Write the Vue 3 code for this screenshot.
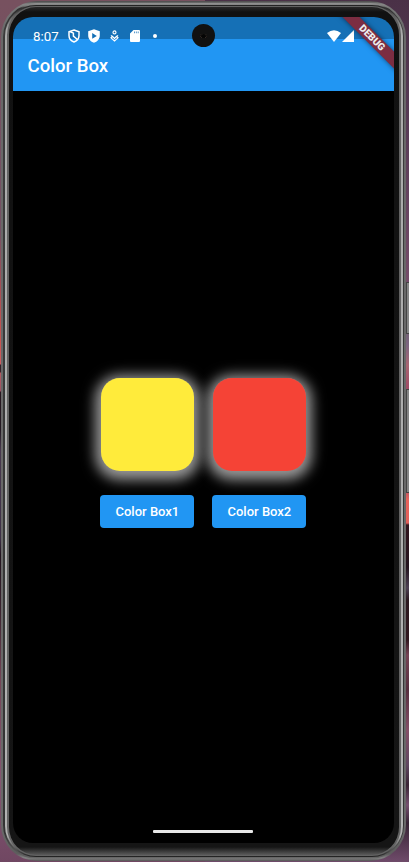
<script setup>
import { ref } from 'vue'

const boxes = ref([
  { label: 'Color Box1', tone: 'yellow' },
  { label: 'Color Box2', tone: 'red' },
])
</script>

<template>
  <div class="desktop">
    <i class="key key-short"></i>
    <i class="key key-long"></i>
    <div class="phone">
      <div class="groove">
        <div class="rim">
          <div class="bezel">
            <div class="screen">
              <header>
                <div class="status">
                  <span class="time">8:07</span>
                  <svg class="shield" viewBox="0 0 12 14"><path d="M6 1 11 2.7V6.5C11 9.7 8.8 12 6 13 3.2 12 1 9.7 1 6.5V2.7Z" fill="none" stroke="#fff" stroke-width="1.5" /><path d="M2 2.5 5.4 4.2V7.2L9.4 10.5" fill="none" stroke="#fff" stroke-width="1.5" /></svg>
                  <svg class="play" viewBox="0 0 12 14"><path fill="#fff" fill-rule="evenodd" d="M6 .3 11.8 2.3V6.5C11.8 10 9.3 12.8 6 13.7 2.7 12.8.2 10 .2 6.5V2.3ZM4.2 4.1V9.7L8.8 6.9Z" /></svg>
                  <svg class="care" viewBox="0 0 9 12"><g fill="none" stroke="#fff" stroke-width="1.15"><circle cx="4.5" cy="2.4" r="1.5" /><path d="M1 5.4 4.5 8.5 8 5.4M1 7.8 4.5 11 8 7.8 6.5 6.4 4.5 8.4 2.5 6.4Z" /></g></svg>
                  <svg class="card" viewBox="0 0 10 12"><path fill="#fff" fill-rule="evenodd" d="M3.5 0H9Q10 0 10 1V11Q10 12 9 12H1Q0 12 0 11V3.5ZM4 1.6V3.2H4.7V1.6ZM5.9 1.6V3.2H6.6V1.6ZM7.8 1.6V3.2H8.5V1.6Z" /></svg>
                  <i class="dot"></i>
                  <svg class="wifi" viewBox="0 0 14 12"><path fill="#fff" d="M0 3Q7-2.6 14 3L7 12Z" /></svg>
                  <svg class="signal" viewBox="0 0 12 12"><path fill="#fff" d="M12 0V12H0Z" /></svg>
                </div>
                <h1>Color Box</h1>
              </header>
              <main>
                <section v-for="box in boxes" :key="box.label">
                  <div class="box" :class="box.tone"></div>
                  <button>{{ box.label }}</button>
                </section>
              </main>
              <div class="home"></div>
              <div class="camera"><i></i></div>
              <div class="banner">DEBUG</div>
            </div>
          </div>
        </div>
      </div>
    </div>
  </div>
</template>

<style>
body { margin: 0; overflow: hidden; }
</style>

<style scoped>
* { box-sizing: border-box; }
.desktop {
  position: relative;
  width: 409px;
  height: 862px;
  padding: 1px 3px 1px 1px;
  overflow: hidden;
  font-family: Roboto, sans-serif;
  background:
    linear-gradient(#77515f 0, #755064 230px, #a84e55 290px, #c85450 340px, #ce5c60 364px, #321f29 365px, #3b2028 372px, #b55a62 373px, #9d5263 391px, #281720 392px, #241a23 430px, #49394f 450px, #3e3047 538px, #241520 555px, #3c2430 610px, #754557 680px, #855571 780px, #704762 862px) left / 205px 100% no-repeat,
    linear-gradient(#4a3147 0, #593c57 130px, #754c69 281px, #746276 333px, #7c6580 345px, #a86572 365px, #a04d66 387px, #b65662 490px, #e9635c 500px, #e0605b 523px, #32151e 525px, #24141e 567px, #4d4053 588px, #2b1920 600px, #31171f 640px, #754354 655px, #572f3f 690px, #844f67 730px, #604760 765px, #3a2535 785px, #76506f 805px, #382435 823px, #6f4b6a 862px) right / 204px 100% no-repeat;
}
.phone {
  height: 860px;
  padding: 2px;
  border-radius: 36px;
  background: linear-gradient(#484848, #858585 3px, #777 7px, #686868 30px, #686868 830px, #5d5d5d 853px, #858585 857px, #555);
}
.groove {
  height: 100%;
  padding: 2px 1px 2px 2px;
  border-radius: 34px;
  background: linear-gradient(#949494, #777 3px, #303030 5px, #3b3b3b 30px, #333 830px, #606060 854px, #777);
}
.rim {
  height: 100%;
  padding: 1px 2px;
  border-radius: 31px;
  background: linear-gradient(#202020, #aaa 25px, #b2b2b2 830px, #202020);
}
.bezel {
  height: 100%;
  padding: 10px 5px 11px 4px;
  border: 0 solid #626262;
  border-width: 1px 2px 1px 2px;
  border-radius: 29px;
  background: linear-gradient(#292929, #111 5px, #151515 calc(100% - 8px), #5b5b5b);
}
.screen {
  position: relative;
  isolation: isolate;
  display: flex;
  flex-direction: column;
  height: 826px;
  border-radius: 20px;
  overflow: hidden;
  background: #000;
}
header { height: 74px; background: linear-gradient(#1570b6 22px, #2196f3 22px); }
.status { display: flex; align-items: center; height: 36px; padding: 2px 40px 0 20px; }
.time { width: 35px; padding-top: 1px; color: #fff; font-size: 13.3px; line-height: 16px; white-space: nowrap; }
svg { display: block; flex: none; }
.shield { width: 12px; height: 14px; }
.play { width: 12px; height: 14px; margin-left: 8px; }
.care { width: 9px; height: 12px; margin-left: 10px; }
.card { width: 10px; height: 12px; margin-left: 11px; }
.dot { width: 4px; height: 4px; margin-left: 13px; border-radius: 50%; background: #fff; }
.wifi { width: 14px; height: 12px; margin-left: auto; }
.signal { width: 12px; height: 12px; margin-left: 1px; }
h1 { margin: 2px 0 0 14.5px; color: #fff; font-size: 18.6px; font-weight: 500; line-height: 22px; }
main { display: flex; flex: 1; gap: 18px; padding: 286.6px 0 0 87.4px; }
section { display: flex; flex-direction: column; align-items: center; width: 94px; }
.box { position: relative; width: 93px; height: 93px; border-radius: 19px; }
.box::before {
  content: '';
  position: absolute;
  inset: 0;
  z-index: -1;
  border-radius: inherit;
  background: #888;
  box-shadow: 0 3px 13px 6px #989898;
}
.yellow { background: #ffeb3b; }
.red { background: #f54336; }
button {
  width: 94px;
  height: 33.6px;
  margin: 24px 0 0;
  padding: 0;
  border: 0;
  border-radius: 4px;
  background: #2196f3;
  color: #fff;
  font: 500 13px/34px Roboto, sans-serif;
  white-space: nowrap;
}
.home { align-self: center; width: 100px; height: 3px; margin: 0 1px 10px 0; border-radius: 1px; background: #e8e8e8; }
.camera {
  position: absolute;
  top: 7px;
  left: 179px;
  display: flex;
  align-items: center;
  justify-content: center;
  width: 23px;
  height: 23px;
  border-radius: 50%;
  background: #111;
}
.camera i { width: 7px; height: 4px; border: 1px dotted #55463f; border-width: 0 1px; border-radius: 50%; background: #050505; }
.banner {
  position: absolute;
  top: 15px;
  left: 312px;
  width: 94px;
  height: 12px;
  transform: rotate(45deg);
  background: #7c2d42;
  box-shadow: 0 0 5px #0008;
  color: #eee;
  font-size: 10px;
  font-weight: 900;
  line-height: 12px;
  text-align: center;
}
.key { position: absolute; right: 0; width: 3px; border: 1px solid #444; border-right: 0; background: #858585; }
.key-short { top: 282px; height: 52px; }
.key-long { top: 389px; height: 104px; }
</style>
